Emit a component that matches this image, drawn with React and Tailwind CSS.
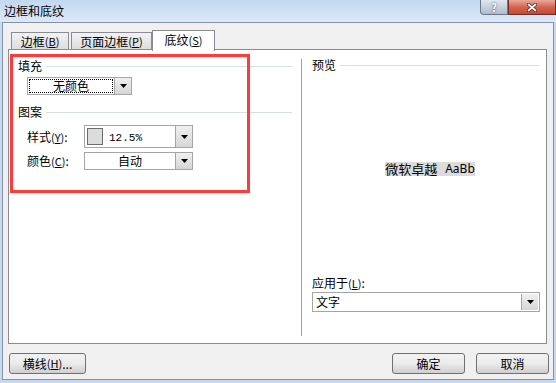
import React from 'react';

const font = { fontFamily: '"Noto Sans CJK SC", "Noto Sans", sans-serif' };

const Arrow = () => (
  <div className="flex h-full w-[17px] items-center justify-center border-l border-[#a5a5a5] bg-gradient-to-b from-[#f0f0f0] to-[#d6d6d6]">
    <svg width="7" height="4" viewBox="0 0 7 4">
      <polygon points="0,0 7,0 3.5,4" fill="#000" />
    </svg>
  </div>
);

const Key = ({ k }) => (
  <span className="text-[11px]">(<span className="underline underline-offset-1">{k}</span>)</span>
);

const Button = ({ children, w }) => (
  <button className={`${w} flex h-[21px] items-center justify-center rounded-[3px] border border-[#707070] bg-gradient-to-b from-[#f2f2f2] via-[#ebebeb] to-[#cfcfcf] text-[12px] leading-none text-black`}>
    {children}
  </button>
);

const SectionTitle = ({ label }) => (
  <div className="flex h-[12px] items-center">
    <span className="text-[12px] leading-[12px]">{label}</span>
    <div className="ml-[4px] h-px flex-1 bg-[#d5dfe5]" />
  </div>
);

export default function App() {
  return (
    <div className="relative h-[383px] w-[556px] overflow-hidden bg-[#c5daf1] text-black" style={font}>
      {/* title bar */}
      <div className="flex h-[22px] bg-gradient-to-b from-[#c2d8f0] to-[#dbe9f8]">
        <span className="pl-[4px] pt-[3px] text-[12px] leading-[16px]">边框和底纹</span>
        <div className="ml-auto flex h-[15px]">
          <div className="flex w-[28px] items-center justify-center rounded-bl-[4px] border border-t-0 border-[#6b7686] bg-gradient-to-b from-[#dfe7f1] to-[#aebccd] text-[11px] font-bold leading-none text-white [text-shadow:0_0_2px_#333]">
            ?
          </div>
          <div className="flex w-[48px] items-center justify-center border border-t-0 border-[#6e2e2a] bg-gradient-to-b from-[#e9a99b] via-[#d4644f] to-[#c24a35]">
            <svg width="10" height="9" viewBox="0 0 10 9">
              <path d="M1.5 1.5 L8.5 7.5 M8.5 1.5 L1.5 7.5" stroke="#5a1a10" strokeWidth="3.2" strokeLinecap="round" />
              <path d="M1.5 1.5 L8.5 7.5 M8.5 1.5 L1.5 7.5" stroke="#fff" strokeWidth="1.8" strokeLinecap="round" />
            </svg>
          </div>
        </div>
      </div>

      {/* window body */}
      <div className="mx-[2px] h-[358px] border border-[#8793a3] bg-[#f0f0f0] pl-[5px] pt-[7px]">
        {/* tabs */}
        <div className="flex h-[20px] items-end pl-[3px] text-[12px]">
          <div className="flex h-[18px] w-[58px] items-center justify-center border border-b-0 border-[#898c95] bg-gradient-to-b from-[#f2f2f2] to-[#dcdcdc] leading-none">
            边框<Key k="B" />
          </div>
          <div className="ml-[2px] flex h-[18px] w-[81px] items-center justify-center border border-b-0 border-[#898c95] bg-gradient-to-b from-[#f2f2f2] to-[#dcdcdc] leading-none">
            页面边框<Key k="P" />
          </div>
          <div className="relative z-10 mb-[-1px] flex h-[21px] w-[63px] items-center justify-center border border-b-0 border-[#898c95] bg-white pb-[2px] leading-none">
            底纹<Key k="S" />
          </div>
        </div>

        {/* panel */}
        <div className="relative -mt-px flex h-[295px] w-[539px] border border-[#898c95] bg-white">
          {/* left column */}
          <div className="w-[292px] pl-[9px] pr-[9px] pt-[10px] text-[12px]">
            <SectionTitle label="填充" />
            <div className="ml-[9px] mt-[5px] flex h-[18px] w-[105px] border border-[#a5a5a5]">
              <div className="m-px flex flex-1 items-center justify-center border border-dotted border-black leading-none">
                无颜色
              </div>
              <Arrow />
            </div>
            <div className="mt-[11px]">
              <SectionTitle label="图案" />
            </div>
            <div className="mt-[7px] flex h-[23px] items-center">
              <span className="ml-[9px] w-[57px] leading-none">
                样式<Key k="Y" />:
              </span>
              <div className="flex h-[23px] w-[109px] border border-[#a5a5a5]">
                <div className="flex flex-1 items-center">
                  <div className="ml-[2px] h-[17px] w-[16px] border border-[#6d6d6d] bg-[#dcdcdc]" />
                  <span className="ml-[6px] mt-[4px] text-[11px] leading-none" style={{ fontFamily: '"Liberation Mono", monospace' }}>
                    12.5%
                  </span>
                </div>
                <Arrow />
              </div>
            </div>
            <div className="mt-[4px] flex h-[18px] items-center">
              <span className="ml-[9px] w-[57px] leading-none">
                颜色<Key k="C" />:
              </span>
              <div className="flex h-[18px] w-[109px] border border-[#a5a5a5]">
                <div className="flex flex-1 items-center justify-center leading-none">自动</div>
                <Arrow />
              </div>
            </div>
          </div>

          {/* right column */}
          <div className="mt-[9px] flex h-[277px] w-[245px] flex-col border-l border-[#a0a0a0] pl-[10px] pr-[7px] text-[12px]">
            <SectionTitle label="预览" />
            <div className="flex h-[196px] items-center justify-center pl-[9px]">
              <span className="flex items-center bg-[#dcdcdc] text-[13px] leading-[14px]">
                微软卓越
                <span className="ml-[8px] text-[12px]" style={{ fontFamily: '"Noto Sans", sans-serif' }}>AaBb</span>
              </span>
            </div>
            <div className="mt-[10px] h-[12px] leading-[12px]">
              应用于<Key k="L" />:
            </div>
            <div className="mt-[3px] flex h-[20px] w-[228px] border border-[#a5a5a5]">
              <div className="flex flex-1 items-center pl-[3px] leading-none">文字</div>
              <div className="m-px flex">
                <Arrow />
              </div>
            </div>
          </div>

          {/* annotation */}
          <div className="absolute left-[1px] top-[4px] h-[139px] w-[240px] border-[3px] border-[#ff3b3b]" />
        </div>

        {/* buttons */}
        <div className="mt-[9px] flex pr-[4px]">
          <div className="ml-[1px]">
            <Button w="w-[77px]">
              横线<Key k="H" />...
            </Button>
          </div>
          <div className="ml-auto flex gap-[11px]">
            <Button w="w-[73px]">确定</Button>
            <Button w="w-[73px]">取消</Button>
          </div>
        </div>
      </div>
    </div>
  );
}
